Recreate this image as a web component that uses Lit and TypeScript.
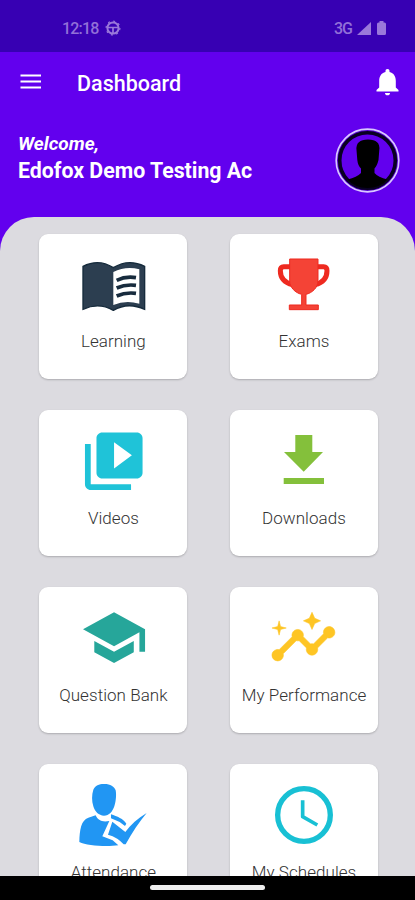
import { LitElement, html, css, svg } from "lit";
import { customElement } from "lit/decorators.js";

// Card artwork is drawn on a 148x96 canvas, the upper part of each card.
const cards = [
  {
    label: "Learning",
    art: svg`<g transform="translate(-9 -9) scale(.3333)">
      <path fill="#2c3e50" stroke="#162b3c" stroke-width="4" d="M159 124Q206 100 250 128Q296 100 344 124V253Q294 230 250 256Q206 231 159 253Z"/>
      <path fill="#fff" d="M250 141Q288 122 328 133V236Q287 224 250 240Z"/>
      <path fill="none" stroke="#172b3d" stroke-width="11" d="M260 166Q287 153 318 158M260 189Q287 177 318 181M260 213Q287 201 318 205"/>
    </g>`,
  },
  {
    label: "Exams",
    art: svg`<g transform="translate(-10 -9) scale(.3333)">
      <path fill="none" stroke="#ee2a20" stroke-width="15" d="M212 125H191Q181 125 181 137C181 160 194 173 218 179M291 125H311Q321 125 321 137C321 160 309 173 285 179"/>
      <path fill="#f44336" stroke="#ee2a20" stroke-width="3" d="M209 102H294V168C294 187 277 204 258 208V240H295V254H208V240H245V208C226 204 209 187 209 168Z"/>
    </g>`,
  },
  {
    label: "Videos",
    art: svg`<path fill="#1fc3d8" transform="translate(40.2 16.7) scale(2.88)" d="M4 6H2v14c0 1.1.9 2 2 2h14v-2H4V6zm16-4H8c-1.1 0-2 .9-2 2v12c0 1.1.9 2 2 2h12c1.1 0 2-.9 2-2V4c0-1.1-.9-2-2-2zm-7.9 12.5V5.4l6.2 4.5z"/>`,
  },
  {
    label: "Downloads",
    art: svg`<path fill="#84c03b" transform="translate(0 .6)" d="M65.3 24.5h17v17H93L73.7 61.2 54 41.5h11.3zM53.7 67.5H94v6H53.7z"/>`,
  },
  {
    label: "Question Bank",
    art: svg`<path fill="#26a69a" transform="translate(41.2 16.9) scale(2.82)" d="M5 13.18v4L12 21l7-3.82v-4L12 17l-7-3.82zM12 3 1 9l11 6 9-4.91V17h2V9L12 3z"/>`,
  },
  {
    label: "My Performance",
    art: svg`<g fill="#fec524" stroke="#fec524" stroke-width=".2" transform="translate(39.1 16.7) scale(2.86)">
      <path d="M21 8c-1.45 0-2.26 1.44-1.93 2.51l-3.55 3.56c-.3-.09-.74-.09-1.04 0l-2.55-2.55C12.27 10.45 11.46 9 10 9c-1.45 0-2.27 1.44-1.93 2.52l-4.56 4.55C2.44 15.74 1 16.55 1 18c0 1.1.9 2 2 2 1.45 0 2.26-1.44 1.93-2.51l4.55-4.56c.3.09.74.09 1.04 0l2.55 2.55C12.73 16.55 13.54 18 15 18c1.45 0 2.27-1.44 1.93-2.52l3.56-3.55C21.56 12.26 23 11.45 23 10c0-1.1-.9-2-2-2z"/>
      <path d="M15 9l.94-2.07L18 6l-2.06-.93L15 3l-.92 2.07L12 6l2.08.93zM3.500 11L4 9l2-.5L4 8l-.5-2L3 8l-2 .5L3 9z"/>
    </g>`,
  },
  {
    label: "Attendance",
    art: svg`<g fill="#2196f3" transform="translate(-9 -9) scale(.3333)">
      <path d="M190 104C196 91 207 87 221 87C239 86 253 94 257 106C260 122 257 143 253 154C247 171 238 182 222 182C206 182 195 170 190 154C185 138 185 119 190 104Z"/>
      <path d="M197 181C204 196 216 202 238 198L217 244L248 256L265 271C228 276 170 272 148 261C149 224 153 196 175 188Z"/>
      <path d="M243 178C261 184 281 192 289 206L285 213Q267 198 243 190Z"/>
      <path d="M247 200L286 231C302 210 323 190 350 174C328 200 306 233 287 268H281Q263 247 234 239Z"/>
    </g>`,
  },
  {
    label: "My Schedules",
    art: svg`<g fill="none" stroke="#18c0d4" transform="translate(-10 -9) scale(.3333)">
      <circle cx="252" cy="180" r="79" stroke-width="16"/>
      <path stroke-width="11" stroke-linejoin="round" d="M248 136V185L292 210"/>
    </g>`,
  },
];

@customElement("app-root")
export class AppRoot extends LitElement {
  static styles = css`
    :host {
      display: flex;
      flex-direction: column;
      height: 900px;
      overflow: hidden;
      background: #6200ee;
      font-family: Roboto, "Liberation Sans", sans-serif;
      color: #fff;
    }
    svg { display: block; flex: none; }
    .status {
      flex: none;
      box-sizing: border-box;
      height: 52px;
      padding: 19px 29px 0 62px;
      display: flex;
      align-items: flex-start;
      background: #3700b3;
      color: #9270d8;
      font-size: 16px;
      font-weight: 500;
      line-height: 19px;
    }
    .time { letter-spacing: -0.8px; }
    .network { letter-spacing: -1px; }
    .grow { flex: 1; }
    .wheel { margin: 1px 0 0 6px; }
    .signal { margin: 3px 0 0 5px; }
    .battery { margin: 2px 0 0 6px; }
    .bar {
      flex: none;
      height: 62px;
      display: flex;
      align-items: center;
      padding: 0 15px 0 20px;
    }
    .menu { margin-bottom: 4px; }
    .title {
      flex: 1;
      margin: 2px 0 0 36px;
      font-size: 21.5px;
      font-weight: 500;
      line-height: 28px;
    }
    .bell { margin-bottom: 2px; }
    .hero {
      flex: none;
      height: 103px;
      box-sizing: border-box;
      padding: 14px 15px 0 18px;
      display: flex;
      justify-content: space-between;
      align-items: flex-start;
    }
    .welcome {
      margin-top: 2px;
      font-size: 19px;
      line-height: 27px;
      font-weight: 700;
      font-style: italic;
    }
    .name {
      font-size: 21.3px;
      line-height: 28px;
      font-weight: 700;
    }
    .panel {
      flex: 1;
      min-height: 0;
      overflow: hidden;
      box-sizing: border-box;
      padding: 16.5px 37px 0 39.4px;
      border-radius: 34px 34px 0 0;
      background: #dcdbe0;
      display: grid;
      grid-template-columns: 148px 148px;
      justify-content: space-between;
      grid-auto-rows: 145.5px;
      row-gap: 31.4px;
    }
    .card {
      background: #fff;
      border-radius: 9px;
      box-shadow: 0 1px 2px rgba(0, 0, 0, 0.22);
      text-align: center;
    }
    .label {
      margin-top: 0.6px;
      font-size: 17px;
      font-weight: 300;
      line-height: 22px;
      letter-spacing: 0.05px;
      color: #333;
      white-space: nowrap;
    }
    .nav {
      flex: none;
      height: 24px;
      background: #000;
      display: flex;
      justify-content: center;
    }
    .pill {
      width: 115px;
      height: 5px;
      margin-top: 9px;
      border-radius: 3px;
      background: #eee;
    }
  `;

  render() {
    return html`
      <div class="status">
        <span class="time">12:18</span>
        <svg class="wheel" width="16" height="16" viewBox="0 0 16 16" fill="none" stroke="#9a78da">
          <circle cx="8" cy="8" r="5.600" stroke-width="2"/>
          <circle cx="8" cy="8" r="6.900" stroke-width="1.200" stroke-dasharray="2 3.420"/>
          <path stroke-width="1.700" d="M2.500 7.500h11M8 8v5.500"/>
        </svg>
        <span class="grow"></span>
        <span class="network">3G</span>
        <svg class="signal" width="14" height="13" viewBox="0 0 14 13"><path fill="#9a78da" d="M14 0v13H0z"/></svg>
        <svg class="battery" width="9" height="14" viewBox="0 0 9 14"><path fill="#9a78da" d="M2.500 0h4v1.500H7.500Q9 1.500 9 3v9.500Q9 14 7.500 14h-6Q0 14 0 12.500V3q0-1.500 1.500-1.500h1z"/></svg>
      </div>
      <div class="bar">
        <svg class="menu" width="21" height="16" viewBox="0 0 21 16"><path stroke="#fff" stroke-width="2" d="M.5 2.500h20.500M.5 8.500h20.500M.5 14.500h20.500"/></svg>
        <h1 class="title">Dashboard</h1>
        <svg class="bell" width="25" height="28" viewBox="0 0 25 28"><path fill="#fff" d="M12.500 1c1.300 0 2 .9 2 2v1c4.300 1 6.300 4.500 6.300 9v6.500l2.700 2.500v1.500H1.500V22l2.700-2.500V13c0-4.500 2-8 6.300-9V3c0-1.100.7-2 2-2zM10 25h5c0 1.500-1 2.300-2.500 2.300S10 26.500 10 25z"/></svg>
      </div>
      <div class="hero">
        <div>
          <div class="welcome">Welcome,</div>
          <div class="name">Edofox Demo Testing Ac</div>
        </div>
        <svg width="65" height="65" viewBox="0 0 65 65">
          <circle cx="32.500" cy="32.500" r="31.300" fill="#5400cf" stroke="#d9c8ff" stroke-width="1.700"/>
          <circle cx="32.500" cy="32.500" r="27.800" fill="#6200ee" stroke="#090022" stroke-width="3.600"/>
          <path d="M21.500 22Q20.500 11.500 33 11.500T44.300 22L43.500 32Q42 38 39.500 40.500V45Q43 49 52.500 51.500Q45 60 32.500 60T12.500 51.500Q22 49 26 45V40.500Q23 38 22.300 32Z"/>
        </svg>
      </div>
      <div class="panel">
        ${cards.map(
          (card) => html`<div class="card">
            <svg width="148" height="96" viewBox="0 0 148 96">${card.art}</svg>
            <div class="label">${card.label}</div>
          </div>`
        )}
      </div>
      <div class="nav"><div class="pill"></div></div>
    `;
  }
}
